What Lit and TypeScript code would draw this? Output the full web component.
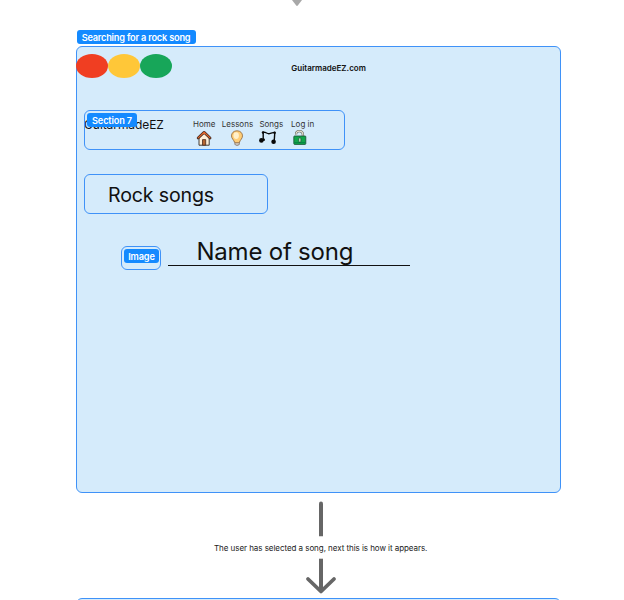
import { LitElement, html, css, svg } from "lit";
import { customElement } from "lit/decorators.js";

const house = svg`<svg class="icon" width="16" height="16" viewBox="0 0 16 16">
  <path d="M3 7.5v7.7h10.2V7.5L8.1 3.2z" fill="#fff0d8" stroke="#302925" stroke-width=".9"/>
  <path d="M6.5 15.2V9.6h3.2v5.6z" fill="#b5652f" stroke="#4b2c20" stroke-width=".8"/>
  <path d="M2.1 8 8.1 2.3 14.1 8" fill="none" stroke="#3c2720" stroke-width="2.6" stroke-linecap="round" stroke-linejoin="round"/>
  <path d="M2.2 7.9 8.1 2.3 14 7.9" fill="none" stroke="#e0662c" stroke-width="1.3" stroke-linecap="round" stroke-linejoin="round"/>
</svg>`;

const bulb = svg`<svg class="icon" width="16" height="16" viewBox="0 0 16 16">
  <path d="M5.9 11.8h4.4v2.1c0 .9-.8 1.4-2.2 1.4s-2.2-.5-2.2-1.4z" fill="#d9d3cb" stroke="#67513e" stroke-width=".7"/>
  <path d="M8 .8C4.7.8 2.5 3 2.5 5.9c0 2.6 2.3 4 3 6.3.7.8 4.3.8 5 0 .7-2.3 3-3.7 3-6.3C13.5 3 11.3.8 8 .8z" fill="#ffce78" stroke="#8b6238" stroke-width=".8"/>
  <ellipse cx="7.2" cy="5.6" rx="2.7" ry="3.4" fill="#fff0cb"/>
</svg>`;

const notes = svg`<svg class="icon start" width="18" height="16" viewBox="0 0 18 16">
  <path d="M4.2 10V2.2C7.2 1.6 8 4.4 10.5 3.6Q13 2.6 15.8 2.4L15.2 11.5" fill="none" stroke="#080808" stroke-width="1.4" stroke-linejoin="round"/>
  <circle cx="2.4" cy="10.4" r="2.3" fill="#080808"/><circle cx="4.8" cy="9.8" r="1.2" fill="#080808"/>
  <circle cx="14.6" cy="11.8" r="2.3" fill="#080808"/>
  <circle cx="4" cy="2.5" r="1.2" fill="#080808"/><circle cx="15.6" cy="2.7" r="1.2" fill="#080808"/>
</svg>`;

const lock = svg`<svg class="icon start" width="16" height="16" viewBox="0 0 16 16">
  <path d="M5.2 4.6C4.7 2.5 6.1 1.2 8.3 1.2s3.6 1.6 3.6 3.8V7.5" fill="none" stroke="#5c6158" stroke-width="2.3"/>
  <path d="M5.2 4.6C4.7 2.5 6.1 1.2 8.3 1.2s3.6 1.6 3.6 3.8V7.5" fill="none" stroke="#e6dfcf" stroke-width="1.2"/>
  <rect x="2.8" y="6" width="12" height="8.4" rx=".8" fill="#10a64a" stroke="#174c31" stroke-width=".8"/>
  <path d="M3.5 12.6h10.6" stroke="#087941" stroke-width=".8"/>
  <rect x="7.7" y="7.9" width="2.2" height="4.2" rx=".9" fill="#c9efcf" stroke="#17502f" stroke-width=".7"/>
</svg>`;

@customElement("app-root")
export class AppRoot extends LitElement {
  static styles = css`
    :host { display: block; position: relative; width: 624px; height: 600px; overflow: hidden; background: #fff; font-family: Inter, sans-serif; color: #111; }
    * { box-sizing: border-box; }
    .section { position: absolute; background: #d5ebfb; border: 1px solid #3f92f8; border-radius: 6px; }
    .node { position: absolute; white-space: nowrap; }
    .tag { position: absolute; display: flex; align-items: center; justify-content: center; background: #148aff; color: #fff; border-radius: 3px; font-size: 9.2px; font-weight: 600; white-space: nowrap; height: 14px; }
    .tag-main { left: 76.5px; top: 30px; width: 119px; letter-spacing: -.2px; }
    .tag-nav { left: 2px; top: 2px; width: 50px; letter-spacing: -.14px; }
    .tag-image { left: 2px; top: 2px; width: 35px; letter-spacing: -.14px; }
    .browser { left: 76px; top: 46px; width: 485px; height: 447px; }
    .inner { border-radius: 6px; background: none; }
    .lights { position: absolute; left: 76.5px; top: 54px; display: flex; }
    .light { width: 32px; height: 24px; border-radius: 50%; }
    .lights { left: 76px; }
    .red { background: #f03e22; } .yellow { background: #ffc738; } .green { background: #17a659; }
    .site { left: 291.3px; top: 62px; font-size: 8px; line-height: 12px; font-weight: 600; }
    .nav { left: 84px; top: 110px; width: 261px; height: 40px; }
    .brand { left: 84px; top: 117px; font-size: 12px; line-height: 16px; letter-spacing: -.08px; }
    .menu { position: absolute; left: 193px; top: 118px; display: flex; gap: 6.3px; }
    .item { display: flex; flex-direction: column; align-items: center; font-size: 8px; line-height: 12px; color: #333; }
    .item:last-child { margin-left: 1.6px; }
    .icon { display: block; }
    .start { align-self: flex-start; }
    .genre { left: 84px; top: 174px; width: 184.4px; height: 40px; }
    .genre-text { left: 108px; top: 182px; font-size: 19.6px; line-height: 26px; letter-spacing: -.16px; }
    .image { left: 121px; top: 246px; width: 40px; height: 24px; }
    .name { left: 196.5px; top: 236px; font-size: 24px; line-height: 32px; letter-spacing: -.22px; }
    .rule { position: absolute; left: 168px; top: 265px; width: 242px; height: 1.3px; background: #111; }
    .caption { left: 214px; top: 542px; font-size: 8px; line-height: 12px; letter-spacing: -.055px; color: #222; }
    .arrows { position: absolute; left: 0; top: 0; }
    .next { left: 76px; top: 598px; width: 485px; height: 80px; }
  `;

  render() {
    return html`
      <div class="section browser"></div>
      <div class="tag tag-main">Searching for a rock song</div>
      <div class="lights"><div class="light red"></div><div class="light yellow"></div><div class="light green"></div></div>
      <div class="node site">GuitarmadeEZ.com</div>
      <div class="node brand">GuitarmadeEZ</div>
      <div class="section inner nav"><div class="tag tag-nav">Section 7</div></div>
      <div class="menu">
        <div class="item">Home${house}</div>
        <div class="item">Lessons${bulb}</div>
        <div class="item">Songs${notes}</div>
        <div class="item">Log in${lock}</div>
      </div>
      <div class="section inner genre"></div>
      <div class="node genre-text">Rock songs</div>
      <div class="section inner image"><div class="tag tag-image">Image</div></div>
      <div class="node name">Name of song</div>
      <div class="rule"></div>
      <svg class="arrows" width="624" height="600" viewBox="0 0 624 600" fill="none" stroke="#666" stroke-linecap="round" stroke-linejoin="round">
        <path d="M292 0h10l-4.2 5.5q-.8.8-1.6 0z" fill="#a8a8a8" stroke="none"/>
        <path d="M319 536.3V503.5a2 2 0 0 1 4 0V536.3z" fill="#666" stroke="none"/>
        <path d="M319 558.7h4V590h-4z" fill="#666" stroke="none"/>
        <path d="M308 579l13 12.5L334 579" stroke-width="3.8"/>
      </svg>
      <div class="node caption">The user has selected a song, next this is how it appears.</div>
      <div class="section next"></div>
    `;
  }
}
